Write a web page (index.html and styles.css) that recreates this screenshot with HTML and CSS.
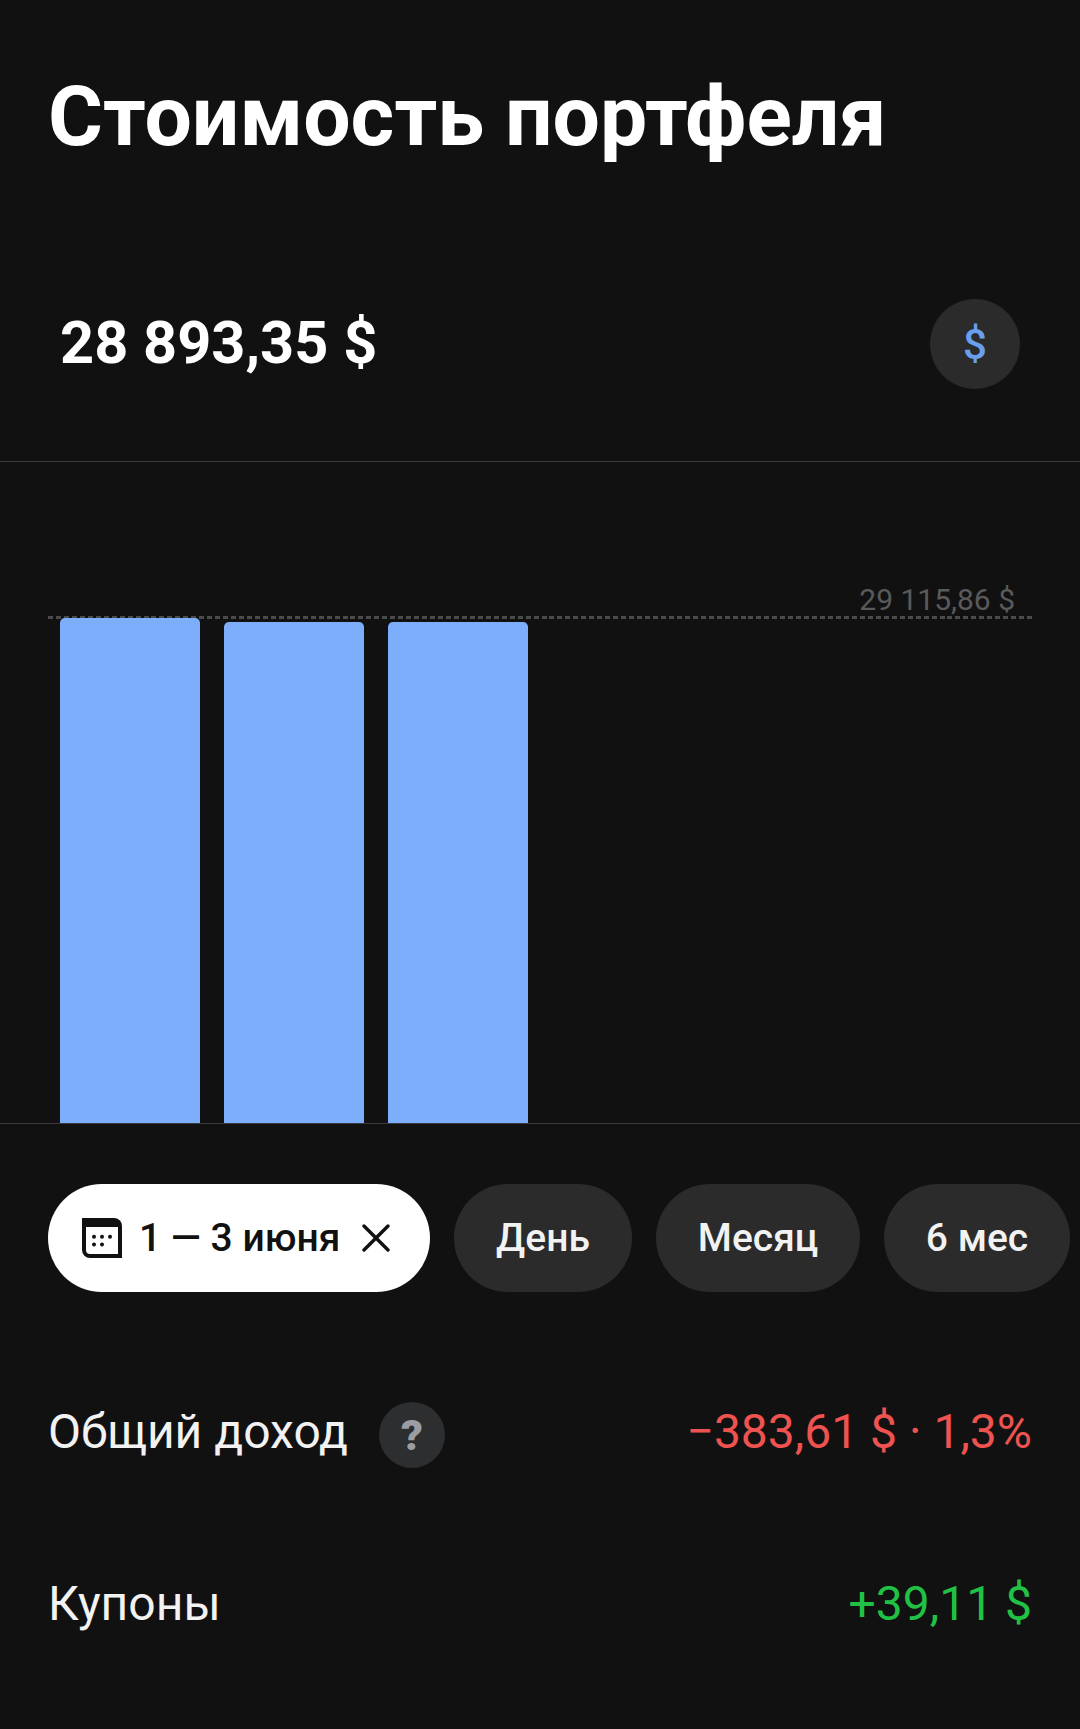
FILE: index.html
```html
<!DOCTYPE html>
<html lang="ru">
<head>
    <meta charset="UTF-8">
    <meta name="viewport" content="width=device-width, initial-scale=1.0">
    <title>Стоимость портфеля</title>
    <link rel="stylesheet" href="styles.css">
</head>
<body>
    <h1 class="title">Стоимость портфеля</h1>

    <div class="total">
        <span class="total-value">28 893,35 $</span>
        <span class="currency">$</span>
    </div>

    <!-- График -->
    <div class="chart">
        <div class="chart-max">
            <span class="chart-max-label">29 115,86 $</span>
        </div>
        <div class="bar" style="height: 505px"></div>
        <div class="bar" style="height: 501px"></div>
        <div class="bar" style="height: 501px"></div>
    </div>

    <!-- Периоды -->
    <div class="periods">
        <div class="pill pill-active">
            <svg class="pill-calendar" viewBox="0 0 40 40" aria-hidden="true">
                <path d="M0 0h32a8 8 0 0 1 8 8v32H8a8 8 0 0 1-8-8z" fill="#111112"/>
                <path d="M4 9h32v27H8a4 4 0 0 1-4-4z" fill="#fff"/>
                <circle cx="12" cy="18.7" r="2" fill="#111112"/>
                <circle cx="20" cy="18.7" r="2" fill="#111112"/>
                <circle cx="28" cy="18.7" r="2" fill="#111112"/>
                <circle cx="12" cy="26.5" r="2" fill="#111112"/>
                <circle cx="20" cy="26.5" r="2" fill="#111112"/>
            </svg>
            <span>1 — 3 июня</span>
            <svg class="pill-close" viewBox="0 0 28 28" aria-hidden="true">
                <path d="M2 2l24 24M26 2L2 26" stroke="#111112" stroke-width="3.4" stroke-linecap="round" fill="none"/>
            </svg>
        </div>
        <div class="pill pill-day">День</div>
        <div class="pill pill-month">Месяц</div>
        <div class="pill pill-half">6 мес</div>
    </div>

    <!-- Доход -->
    <div class="row row-income">
        <div class="row-name">
            <span>Общий доход</span>
            <span class="help">?</span>
        </div>
        <span class="loss">−383,61 $ · 1,3%</span>
    </div>
    <div class="row row-coupons">
        <span>Купоны</span>
        <span class="gain">+39,11 $</span>
    </div>
</body>
</html>
```

FILE: styles.css
```css
body {
    margin: 0;
    height: 1729px;
    overflow: hidden;
    background-color: #111112;
    color: #ffffff;
    font-family: Roboto, "Noto Sans", sans-serif;
}
.title {
    margin: 0;
    padding: 66px 0 0 48px;
    font-size: 84px;
    line-height: 102px;
    font-weight: 700;
}
.total {
    display: flex;
    justify-content: space-between;
    align-items: center;
    margin-top: 131px;
    padding: 0 60px;
    height: 90px;
}
.total-value {
    margin-top: -2px;
    font-size: 59.5px;
    font-weight: 700;
}
.currency {
    display: flex;
    justify-content: center;
    align-items: center;
    width: 90px;
    height: 90px;
    border-radius: 50%;
    background-color: #2b2b2c;
    color: #6a9fee;
    font-size: 42px;
    font-weight: 500;
}
/* График */
.chart {
    position: relative;
    display: flex;
    align-items: flex-end;
    gap: 24px;
    height: 663px;
    margin-top: 72px;
    padding-left: 60px;
    box-sizing: border-box;
    border-top: 1px solid #3a3a3b;
    border-bottom: 1px solid #3a3a3b;
}
.chart-max {
    position: absolute;
    left: 48px;
    right: 48px;
    top: 154px;
    height: 3px;
    background: repeating-linear-gradient(to right, #4b4b4c 0, #4b4b4c 5px, transparent 5px, transparent 7.96px);
}
.chart-max-label {
    position: absolute;
    right: 17px;
    bottom: 0;
    font-size: 30px;
    line-height: 38px;
    color: #5a5a5b;
}
.bar {
    position: relative;
    width: 140px;
    background-color: #7daefc;
    border-radius: 5px 5px 0 0;
}
/* Периоды */
.periods {
    display: flex;
    gap: 24px;
    margin-top: 60px;
    padding-left: 48px;
}
.pill {
    display: flex;
    justify-content: center;
    align-items: center;
    flex: none;
    height: 108px;
    border-radius: 54px;
    background-color: #2b2b2c;
    font-size: 39px;
    font-weight: 500;
    color: #f2f2f2;
}
.pill-active {
    justify-content: flex-start;
    width: 382px;
    box-sizing: border-box;
    padding-left: 34px;
    gap: 17px;
    background-color: #ffffff;
    color: #111112;
}
.pill-calendar {
    width: 40px;
    height: 40px;
}
.pill-close {
    width: 28px;
    height: 28px;
    margin-left: 5px;
}
.pill-day {
    width: 178px;
}
.pill-month {
    width: 204px;
}
.pill-half {
    width: 186px;
}
/* Доход */
.row {
    display: flex;
    justify-content: space-between;
    align-items: center;
    padding: 0 48px;
    font-size: 48px;
    line-height: 60px;
    color: #f2f2f2;
}
.row-income {
    margin-top: 104px;
}
.row-coupons {
    margin-top: 106px;
}
.row-name {
    display: flex;
    align-items: center;
    gap: 31px;
}
.help {
    display: flex;
    justify-content: center;
    align-items: center;
    width: 66px;
    height: 66px;
    margin-top: 6px;
    border-radius: 50%;
    background-color: #2d2e30;
    color: #9b9da3;
    font-size: 43px;
    font-weight: 900;
}
.loss {
    color: #ee5350;
}
.gain {
    color: #21c244;
}
```
